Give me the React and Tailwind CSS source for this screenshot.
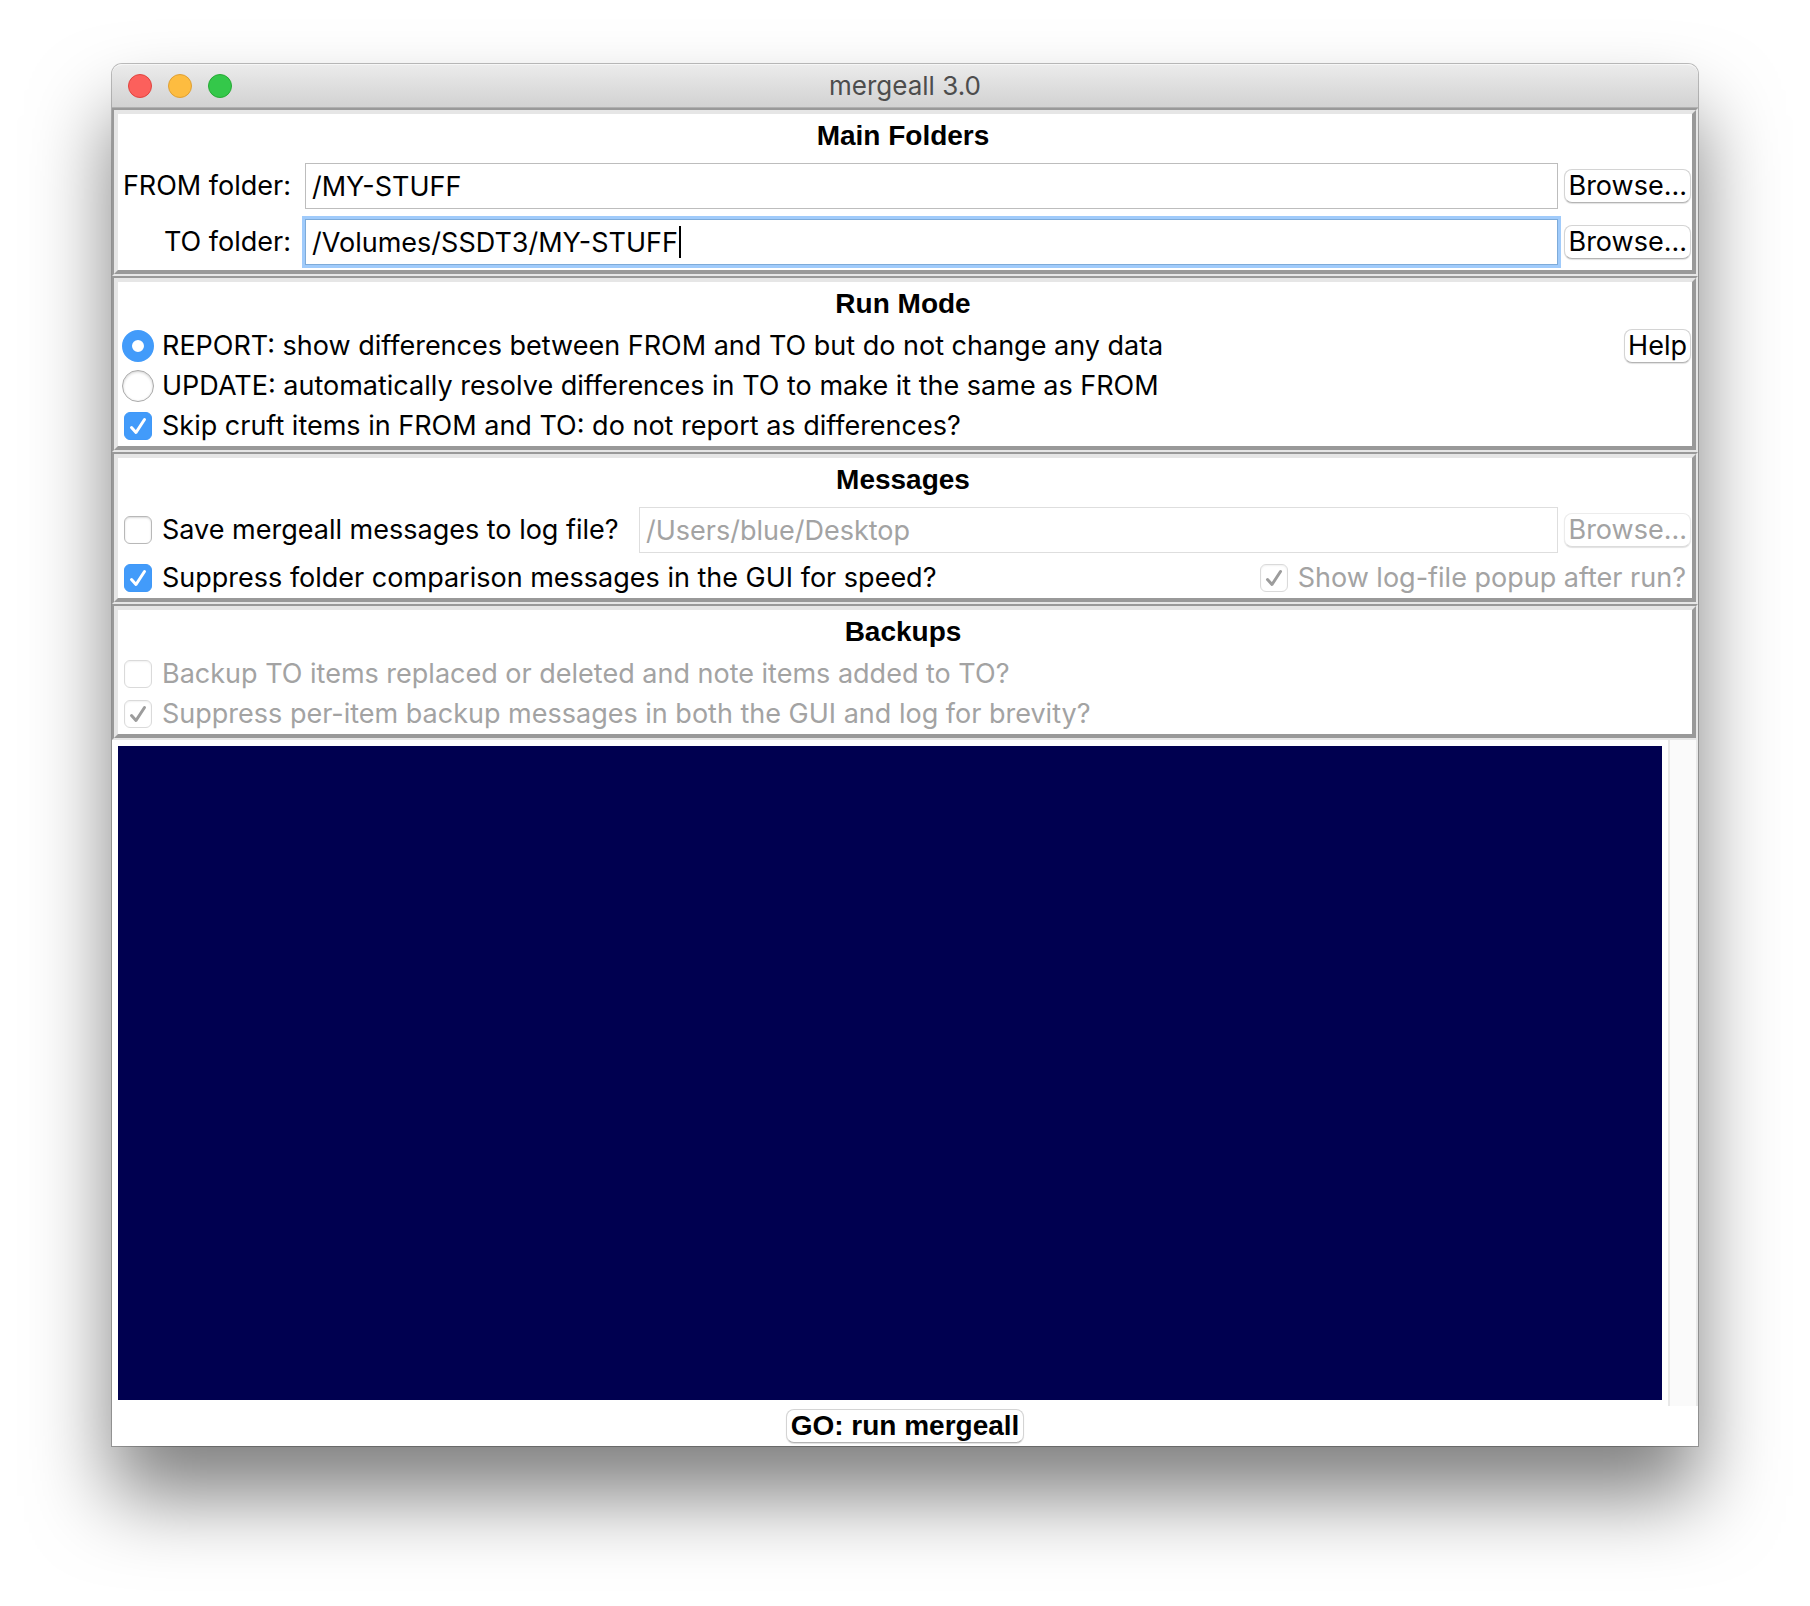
import { useState } from "react";

function Panel({ title, children }) {
  return (
    <section className="border-2 border-t-[#999] border-l-[#999] border-r-[#e6e6e6] border-b-[#e6e6e6]">
      <div className="border-4 border-t-[#e6e6e6] border-l-[#e6e6e6] border-r-[#999] border-b-[#999] bg-white">
        <h2 className="h-11 pr-1 text-center font-['Liberation_Sans',Arial,sans-serif] text-[28px] leading-[44px] font-bold">
          {title}
        </h2>
        {children}
      </div>
    </section>
  );
}

function PushButton({ children, disabled, label, bold }) {
  return (
    <button
      type="button"
      disabled={disabled}
      aria-label={label}
      className={
        "flex h-[34px] shrink-0 items-center justify-center rounded-lg border border-[#d4d4d4] border-b-[#b4b4b4] bg-white whitespace-nowrap shadow-[0_1px_1px_rgba(0,0,0,0.12)] disabled:border-[#ececec] disabled:border-b-[#dcdcdc] disabled:text-[#a3a3a3] " +
        (bold
          ? "px-1 font-['Liberation_Sans',Arial,sans-serif] text-[28px] leading-8 font-bold"
          : "px-[3px] leading-8")
      }
    >
      {children}
    </button>
  );
}

function Tick({ className }) {
  return (
    <svg
      viewBox="0 0 28 28"
      fill="none"
      stroke="currentColor"
      strokeWidth="3"
      strokeLinecap="round"
      strokeLinejoin="round"
      className={"pointer-events-none absolute inset-0 size-7 " + className}
      aria-hidden="true"
    >
      <path d="M7.5 15.5 L12 20.5 L20.5 7.5" />
    </svg>
  );
}

function CheckOption({ children, initial = false, disabled = false, className = "" }) {
  const [on, setOn] = useState(initial);
  return (
    <label
      className={
        "flex items-center gap-2.5 whitespace-nowrap " +
        (disabled ? "text-[#a3a3a3] " : "") +
        className
      }
    >
      <span className="relative size-7 shrink-0">
        <input
          type="checkbox"
          checked={on}
          disabled={disabled}
          onChange={(e) => setOn(e.target.checked)}
          className="block size-7 appearance-none rounded-md border border-[#b8b8b8] bg-white shadow-[inset_0_1px_2px_rgba(0,0,0,0.15)] checked:border-[#3f98f8] checked:bg-[#429bfa] checked:shadow-none disabled:border-[#dadada] disabled:bg-white disabled:shadow-[inset_0_1px_2px_rgba(0,0,0,0.06)]"
        />
        {on && <Tick className={disabled ? "text-[#9c9c9c]" : "text-white"} />}
      </span>
      {children}
    </label>
  );
}

function RadioOption({ children, value, mode, setMode }) {
  return (
    <label className="flex h-10 items-center gap-2 pl-1 whitespace-nowrap">
      <input
        type="radio"
        name="mode"
        value={value}
        checked={mode === value}
        onChange={() => setMode(value)}
        className="block size-8 shrink-0 appearance-none rounded-full border border-[#a9a9a9] bg-white shadow-[inset_0_1px_3px_rgba(0,0,0,0.2)] checked:border-[10px] checked:border-[#429bfa] checked:shadow-none"
      />
      {children}
    </label>
  );
}

const field =
  "block h-[46px] w-full border bg-white px-1.5 outline-none disabled:border-[#dedede] disabled:text-[#a3a3a3]";

export default function App() {
  const [mode, setMode] = useState("report");
  const [from, setFrom] = useState("/MY-STUFF");
  const [to, setTo] = useState("/Volumes/SSDT3/MY-STUFF");

  return (
    <div className="flex min-h-screen flex-col bg-white px-28 pt-16 pb-40 font-[Inter,sans-serif] text-[27px] leading-10 text-black">
      <main className="flex flex-1 flex-col rounded-t-[10px] bg-white shadow-[0_0_0_1px_rgba(0,0,0,0.25),0_50px_80px_rgba(0,0,0,0.5)]">
        <header className="grid h-11 grid-cols-[1fr_auto_1fr] items-center rounded-t-[10px] border-t border-b border-t-[#f6f6f6] border-b-[#b0b0b0] bg-linear-to-b from-[#ebebeb] to-[#d2d2d2] px-4">
          <div className="flex gap-4">
            <button type="button" aria-label="Close" className="size-6 rounded-full border border-[#e0443f] bg-[#fc605c]" />
            <button type="button" aria-label="Minimize" className="size-6 rounded-full border border-[#dfa034] bg-[#fdbc40]" />
            <button type="button" aria-label="Zoom" className="size-6 rounded-full border border-[#27aa35] bg-[#34c84a]" />
          </div>
          <h1 className="text-[26px] leading-10 text-[#4d4d4d]">mergeall 3.0</h1>
        </header>

        <Panel title="Main Folders">
          <div className="flex h-14 items-center pr-px">
            <label htmlFor="from" className="w-[173px] shrink-0 text-right whitespace-nowrap">
              FROM folder:
            </label>
            <div className="mr-1.5 ml-3.5 flex-1">
              <input id="from" value={from} onChange={(e) => setFrom(e.target.value)} className={field + " border-[#bdbdbd]"} />
            </div>
            <PushButton label="Browse for FROM folder">Browse...</PushButton>
          </div>
          <div className="flex h-14 items-center pr-px">
            <label htmlFor="to" className="w-[173px] shrink-0 text-right whitespace-nowrap">
              TO folder:
            </label>
            <div className="relative mr-1.5 ml-3.5 flex-1">
              <input
                id="to"
                value={to}
                onChange={(e) => setTo(e.target.value)}
                className={field + " border-[#7eabd9] caret-transparent ring-3 ring-[#a0cbfb]"}
              />
              <span aria-hidden="true" className="pointer-events-none absolute inset-y-0 left-2 flex items-center">
                <span className="invisible">{to}</span>
                <span className="h-8 w-0.5 bg-black" />
              </span>
            </div>
            <PushButton label="Browse for TO folder">Browse...</PushButton>
          </div>
        </Panel>

        <Panel title="Run Mode">
          <div className="flex items-start justify-between pr-px">
            <div>
              <RadioOption value="report" mode={mode} setMode={setMode}>
                REPORT: show differences between FROM and TO but do not change any data
              </RadioOption>
              <RadioOption value="update" mode={mode} setMode={setMode}>
                UPDATE: automatically resolve differences in TO to make it the same as FROM
              </RadioOption>
              <CheckOption initial className="h-10 pl-1.5">
                Skip cruft items in FROM and TO: do not report as differences?
              </CheckOption>
            </div>
            <div className="flex h-10 items-center">
              <PushButton>Help</PushButton>
            </div>
          </div>
        </Panel>

        <Panel title="Messages">
          <div className="flex h-14 items-center pr-px">
            <CheckOption className="w-[521px] shrink-0 pl-1.5">Save mergeall messages to log file?</CheckOption>
            <div className="mr-1.5 flex-1">
              <input aria-label="Log file folder" defaultValue="/Users/blue/Desktop" disabled className={field} />
            </div>
            <PushButton disabled label="Browse for log folder">Browse...</PushButton>
          </div>
          <div className="flex h-10 items-center justify-between pr-1.5 pl-1.5">
            <CheckOption initial>Suppress folder comparison messages in the GUI for speed?</CheckOption>
            <CheckOption initial disabled>Show log-file popup after run?</CheckOption>
          </div>
        </Panel>

        <Panel title="Backups">
          <CheckOption disabled className="h-10 pl-1.5">
            Backup TO items replaced or deleted and note items added to TO?
          </CheckOption>
          <CheckOption initial disabled className="h-10 pl-1.5">
            Suppress per-item backup messages in both the GUI and log for brevity?
          </CheckOption>
        </Panel>

        <div className="flex flex-1">
          <div className="flex flex-1 p-1.5">
            <textarea aria-label="Run output" readOnly className="block flex-1 resize-none bg-[#000050] p-2 text-white outline-none" />
          </div>
          <div className="w-[30px] border-x-2 border-[#e8e8e8] bg-[#fafafa]" />
        </div>

        <footer className="flex h-10 items-center justify-center">
          <PushButton bold>GO: run mergeall</PushButton>
        </footer>
      </main>
    </div>
  );
}
